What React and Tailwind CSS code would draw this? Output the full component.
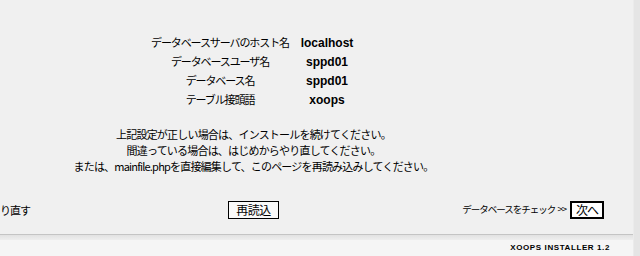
import React from 'react';

const jp = { fontFamily: '"Noto Sans CJK JP", "Liberation Sans", sans-serif' };
const latin = { fontFamily: '"Liberation Sans", Arial, sans-serif' };

const rows = [
  { label: 'データベースサーバのホスト名', value: 'localhost' },
  { label: 'データベースユーザ名', value: 'sppd01' },
  { label: 'データベース名', value: 'sppd01' },
  { label: 'テーブル接頭語', value: 'xoops' },
];

export default function App() {
  return (
    <div className="w-[640px] h-[256px] overflow-hidden flex bg-[#f0f0f0] text-black" style={jp}>
      <div className="flex-1 flex flex-col">
        <div className="flex-1 flex flex-col">
          {/* settings table */}
          <div className="pt-[33px] pl-[150px] flex flex-col">
            {rows.map((r, i) => (
              <div key={i} className="flex h-[19px] items-center">
                <div className="w-[140px] flex justify-center whitespace-nowrap text-[11px] tracking-[-1.1px] leading-none">
                  {r.label}
                </div>
                <div className="w-[74px] text-center text-[12px] font-bold leading-none" style={latin}>
                  {r.value}
                </div>
              </div>
            ))}
          </div>

          {/* notice */}
          <div className="mt-[17px] w-[507px] flex flex-col items-center whitespace-nowrap text-[11px] leading-[16px] tracking-[-0.8px]">
            <p>上記設定が正しい場合は、インストールを続けてください。</p>
            <p>間違っている場合は、はじめからやり直してください。</p>
            <p>または、mainfile.phpを直接編集して、このページを再読み込みしてください。</p>
          </div>

          {/* buttons */}
          <div className="mt-[27px] flex items-center h-[18px]">
            <div className="w-[228px] text-[11px] tracking-[-1px] leading-none">り直す</div>
            <button className="w-[51px] h-[18px] border border-black bg-[#fafafa] text-[12px] leading-none tracking-[-0.5px]" style={jp}>
              再読込
            </button>
            <div className="flex-1 flex justify-end items-center">
              <span className="text-[9.5px] tracking-[-1px] leading-none mr-[4px] whitespace-nowrap">
                データベースをチェック&nbsp;&nbsp;&gt;&gt;
              </span>
              <button className="w-[34px] h-[18px] border-2 border-black bg-white text-[12px] leading-none tracking-[-1px] mr-[29px]" style={jp}>
                次へ
              </button>
            </div>
          </div>
        </div>

        {/* footer */}
        <div className="h-[22px] flex flex-col">
          <div className="h-px bg-[#c4c4c4]" />
          <div className="h-[5px] bg-gradient-to-b from-[#e2e2e2] to-[#eeeeee]" />
          <div className="flex-1 bg-[#f5f5f5] flex justify-end items-center pr-[23px]">
            <span className="text-[8px] font-bold tracking-[0.6px] leading-none" style={latin}>
              XOOPS INSTALLER 1.2
            </span>
          </div>
        </div>
      </div>
      <div className="w-[7px] bg-[#e5e5e5] border-l border-[#ebebeb]" />
    </div>
  );
}
